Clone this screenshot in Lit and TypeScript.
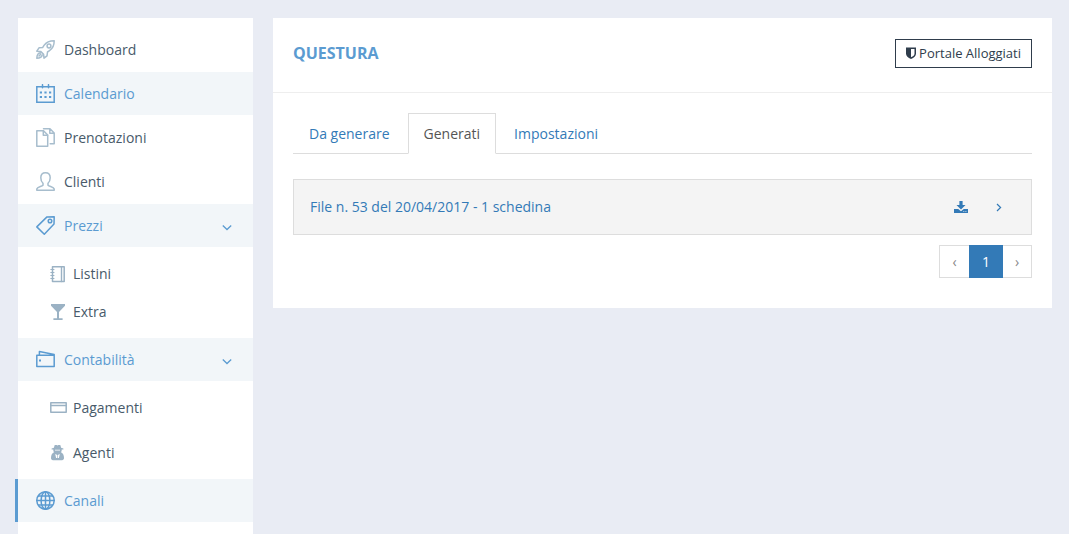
import { LitElement, html, css, svg, nothing } from "lit";
import { customElement, property, state } from "lit/decorators.js";
import { classMap } from "lit/directives/class-map.js";

const line = (body: unknown, w = 19, h = 19) => html`<svg
  width=${w} height=${h} viewBox="0 0 ${w} ${h}" fill="none" stroke="currentColor"
  stroke-width="1.5" stroke-linejoin="round" stroke-linecap="round" aria-hidden="true">${body}</svg>`;

const icons: Record<string, unknown> = {
  rocket: line(svg`<path d="M18.2.8C13.5.8 10.4 2 8 5.400L6.600 7.600 3 7.800.8 11.200l3.800.2 3 3 .4 3.800 3-2.400.5-3.800 2-1.300C16.900 8.500 18.200 5.300 18.200.8z"/>
    <circle cx="13" cy="6" r="1.900"/><path d="M4.400 12.800C2 13 1 14.800.8 18.200c3 0 4.900-.9 5.400-3.200M3 16l1.600-1.600"/>`),
  calendar: line(svg`<path d="M.8 2.800h17.400v15.400H.8z" stroke-linejoin="miter"/><path d="M6.500 .7v3M12.500 .7v3"/>
    <path d="M3.800 8.500h2.200M8.400 8.500h2.200M13 8.500h2.200M3.800 13h2.200M8.400 13h2.200M13 13h2.200" stroke-width="2.200" stroke-linecap="butt"/>`),
  files: line(svg`<path d="M.8 2.800h6.700l4.200 4.200v11.200H.8z"/><path d="M7.300 3v4.200h4.300"/>
    <path d="M7.500.8h6.500l4.200 4.200v10.700h-4M13.800 1v4.200h4.200"/>`),
  user: line(svg`<path d="M9.500.8c-3 0-4.700 2-4.700 5 0 2.200.8 4.200 2.200 5.400v2C5.500 14.600 1.200 14.800.8 17v1.200h17.400V17c-.4-2.200-4.700-2.400-6.200-3.800v-2c1.400-1.200 2.200-3.200 2.200-5.400 0-3-1.700-5-4.700-5z"/>`),
  tag: line(svg`<path d="M11 .9L18.200.8 18 8 8.300 18.200.8 10.900z"/><circle cx="14" cy="5" r="1.800"/>`),
  wallet: line(svg`<path d="M.8 5.200h17.400v11.200H.8zM3.400 5V1.400l14.800 3.200"/><path d="M3 10.600h2" stroke-width="2" stroke-linecap="butt"/>`),
  globe: line(svg`<circle cx="9.500" cy="9.500" r="8.700"/><ellipse cx="9.500" cy="9.500" rx="4.400" ry="8.700"/>
    <path d="M9.500.8v17.400M.8 9.500h17.400M2.400 5h14.200M2.400 14h14.200"/>`),
  notebook: line(svg`<path d="M2.500.8h11.700v14.700H2.500z"/><path d="M11.500 1v14.500" stroke-width="1.400"/>
    <path d="M.8 3.500h3.200M.8 6.500h3.200M.8 9.500h3.200M.8 12.500h3.200" stroke-width="1"/>`, 16, 17),
  glass: html`<svg width="16" height="17" viewBox="0 0 16 17" fill="currentColor" aria-hidden="true"><path d="M1 0h14v1.800L9 8v6.200h3.600V16H3.400v-1.800H7V8L1 1.800z"/></svg>`,
  card: line(svg`<path d="M.8 2.800h15.400v9.400H.8z"/><path d="M1 5.500h15"/>`, 17, 17),
  agent: html`<svg width="16" height="17" viewBox="0 0 16 17" fill="currentColor" fill-rule="evenodd" aria-hidden="true">
    <path d="M4.700 0h1.900l.9.600.9-.6h1.900l.8 2.800 2.300.8v.9h-1.700c.2 1-.1 1.900-.7 2.700 2.200.9 3 3.100 3 5.800 0 1.300-.8 2.200-2 2.200H3c-1.200 0-2-.9-2-2.200 0-2.700.8-4.900 3-5.800-.6-.8-.9-1.700-.7-2.700H1.600v-.9l2.300-.8zM5 4.700v.8h5v-.8zM5.200 9l.9 4h1.100V10zM9.800 9l-2 1v3h1.100z"/></svg>`,
  shield: html`<svg width="10" height="12" viewBox="0 0 10 12" fill="currentColor" fill-rule="evenodd" aria-hidden="true"><path d="M0 .5h10v6.200C10 9 8 10.700 5 12 2 10.700 0 9 0 6.700zM5 2v8.300c2.300-1.100 3.500-2.300 3.500-3.600V2z"/></svg>`,
  download: html`<svg width="14" height="13" viewBox="0 0 14 13" fill="currentColor" aria-hidden="true"><path d="M5.400 0h3.200v4h2.900L7 8.400 2.500 4h2.900z"/><path d="M0 8h4.200L7 10.200 9.800 8H14v4H0z"/><path d="M9.300 10.200h1v.8h-1zM11.400 10.200h1v.8h-1z" fill="#f4f4f4"/></svg>`,
  down: html`<svg width="10" height="7" viewBox="0 0 10 7" fill="none" stroke="currentColor" stroke-width="1.300" aria-hidden="true"><path d="M.8 1.500L5 5.500 9.200 1.500"/></svg>`,
  right: html`<svg width="6" height="9" viewBox="0 0 6 9" fill="none" stroke="currentColor" stroke-width="1.200" aria-hidden="true"><path d="M1 1l3.600 3.500L1 8"/></svg>`,
};

interface Entry {
  label: string;
  icon: string;
  highlighted?: boolean;
  current?: boolean;
  children?: Entry[];
}

const menu: Entry[] = [
  { label: "Dashboard", icon: "rocket" },
  { label: "Calendario", icon: "calendar", highlighted: true },
  { label: "Prenotazioni", icon: "files" },
  { label: "Clienti", icon: "user" },
  {
    label: "Prezzi", icon: "tag", highlighted: true,
    children: [{ label: "Listini", icon: "notebook" }, { label: "Extra", icon: "glass" }],
  },
  {
    label: "Contabilità", icon: "wallet", highlighted: true,
    children: [{ label: "Pagamenti", icon: "card" }, { label: "Agenti", icon: "agent" }],
  },
  { label: "Canali", icon: "globe", highlighted: true, current: true },
];

@customElement("side-menu")
export class SideMenu extends LitElement {
  @property({ attribute: false }) entries: Entry[] = [];

  static styles = css`
    :host { display: block; background: #fff; padding-top: 10px; }
    svg { display: block; flex: none; }
    ul { list-style: none; margin: 0; padding: 0; }
    a { color: #485a6a; text-decoration: none; display: flex; align-items: center; }
    .top { display: flex; flex-direction: column; gap: 1px; }
    .open { margin-bottom: -1px; }
    .link { height: 43px; padding: 0 21px 0 18px; gap: 9px; }
    .link .icon { color: #a7bdcd; }
    .text { flex: 1; }
    .highlighted, .highlighted .icon { color: #5b9bd1; }
    .highlighted { background: #f2f6f9; }
    .current { border-left: 3px solid #5b9bd1; margin-left: -3px; }
    .arrow { padding-top: 3px; }
    .sub { padding: 8px 0 7px; }
    .sub a { height: 38px; padding-left: 32px; gap: 6px; }
    .sub .icon { color: #9bb2c4; width: 17px; }
    .spaced { display: grid; gap: 7px; }
  `;

  render() {
    return html`<nav aria-label="Menu"><ul class="top">
      ${this.entries.map((e) => html`<li class=${e.children ? "open" : ""}>
        <a href="#" class=${classMap({ link: true, highlighted: !!e.highlighted, current: !!e.current })}>
          <span class="icon">${icons[e.icon]}</span><span class="text">${e.label}</span>
          ${e.children ? html`<span class="arrow">${icons.down}</span>` : nothing}
        </a>
        ${e.children ? html`<ul class=${classMap({ sub: true, spaced: e.icon === "wallet" })}>
          ${e.children.map((c) => html`<li><a href="#"><span class="icon">${icons[c.icon]}</span>${c.label}</a></li>`)}
        </ul>` : nothing}
      </li>`)}
    </ul></nav>`;
  }
}

@customElement("app-root")
export class AppRoot extends LitElement {
  @state() private tab = "Generati";

  static styles = css`
    :host {
      display: grid; grid-template-columns: 235px minmax(0, 1fr); gap: 20px;
      box-sizing: border-box; min-height: 100vh; padding: 18px 17px 0 18px;
      background: #e9ecf4; color: #485a6a; font: 14px/20px "Open Sans", sans-serif;
    }
    * { box-sizing: border-box; }
    svg { display: block; flex: none; }
    button { font: inherit; background: none; border: 0; padding: 0; cursor: pointer; }
    .panel { background: #fff; align-self: start; }
    header {
      display: flex; align-items: flex-start; justify-content: space-between;
      padding: 21px 20px 24px; border-bottom: 1px solid #eee;
    }
    h1 { margin: 0; font-size: 16px; line-height: 28px; font-weight: 700; color: #5b9bd1; }
    .portal {
      display: flex; align-items: center; gap: 3px; padding: 3px 10px 4px;
      border: 1px solid #2f3d4c; color: #2f3d4c; font-size: 13px; line-height: 20px; text-decoration: none;
    }
    .body { padding: 20px 20px 30px; }
    .tabs { display: flex; gap: 2px; border-bottom: 1px solid #ddd; margin-bottom: 25px; }
    .tab { height: 41px; margin-bottom: -1px; padding: 0 15px; border: 1px solid transparent; color: #337ab7; }
    .selected { color: #555; background: #fff; border-color: #ddd; border-bottom-color: #fff; }
    .file {
      display: flex; align-items: center; height: 56px; padding: 0 29px 0 16px;
      border: 1px solid #ddd; background: #f4f4f4; color: #337ab7;
    }
    .file a { flex: 1; color: inherit; text-decoration: none; }
    .file button { color: inherit; padding-left: 28px; }
    .pages { display: flex; justify-content: flex-end; margin-top: 10px; }
    .page { height: 33px; width: 30px; border: 1px solid #ddd; color: #888; }
    .prev { border-right: 0; }
    .next { border-left: 0; width: 29px; }
    .active { width: 34px; color: #fff; background: #337ab7; border-color: #337ab7; }
  `;

  render() {
    return html`
      <side-menu .entries=${menu}></side-menu>
      <main class="panel">
        <header>
          <h1>QUESTURA</h1>
          <a class="portal" href="#">${icons.shield}<span>Portale Alloggiati</span></a>
        </header>
        <div class="body">
          <div class="tabs" role="tablist">
            ${["Da generare", "Generati", "Impostazioni"].map((t) => html`<button role="tab"
              aria-selected=${t === this.tab} class=${classMap({ tab: true, selected: t === this.tab })}
              @click=${() => (this.tab = t)}>${t}</button>`)}
          </div>
          <div class="file">
            <a href="#">File n. 53 del 20/04/2017 - 1 schedina</a>
            <button aria-label="Scarica">${icons.download}</button>
            <button aria-label="Apri">${icons.right}</button>
          </div>
          <nav class="pages" aria-label="Pagine">
            <button class="page prev" aria-label="Precedente">‹</button>
            <button class="page active" aria-current="page">1</button>
            <button class="page next" aria-label="Successiva">›</button>
          </nav>
        </div>
      </main>`;
  }
}
